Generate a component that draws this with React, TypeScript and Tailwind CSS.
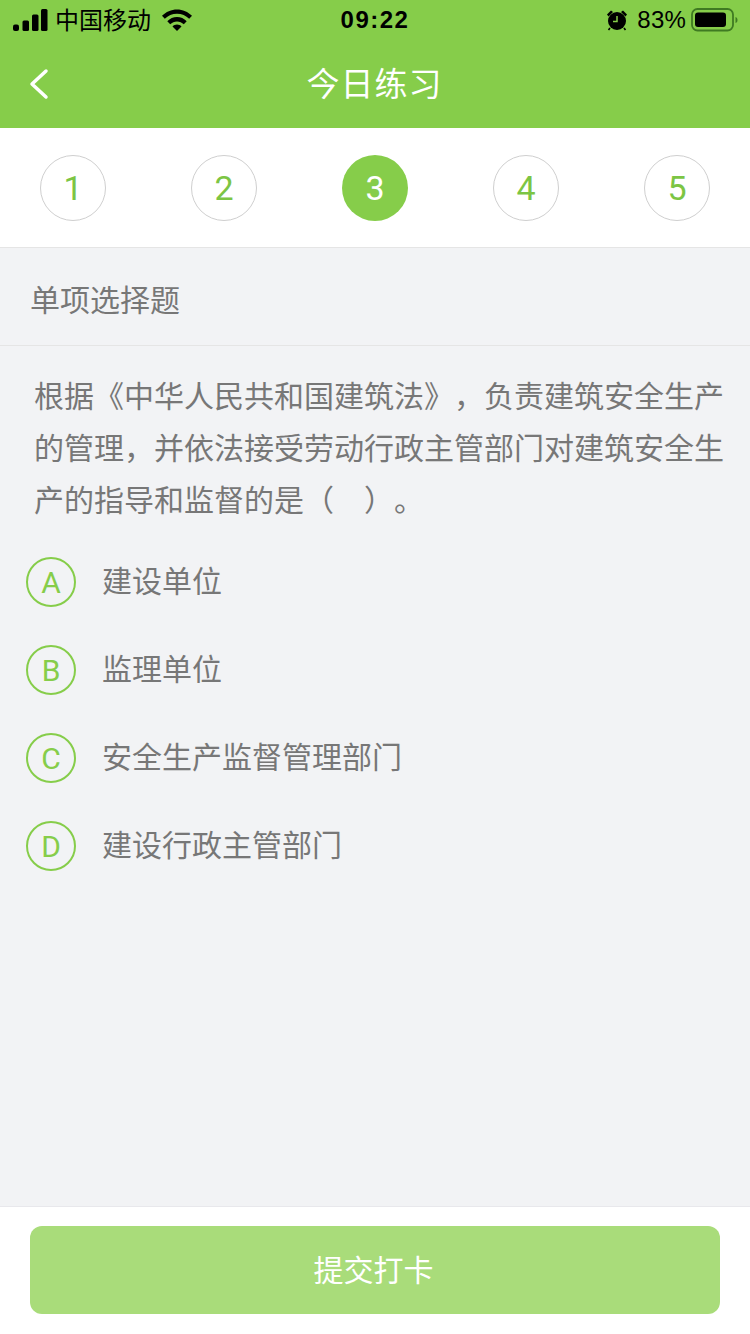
const cjk = "font-['Liberation_Sans','Noto_Sans_CJK_SC',sans-serif]";

function Signal() {
  return (
    <svg width="35" height="22" viewBox="0 0 35 22" fill="#000" className="shrink-0">
      <rect x="0" y="15.500" width="6" height="6.500" rx="2" />
      <rect x="9.500" y="11.500" width="6.500" height="10.500" rx="1.500" />
      <rect x="19" y="5.500" width="6.500" height="16.500" rx="1.500" />
      <rect x="28" y="0" width="6.500" height="22" rx="1.500" />
    </svg>
  );
}

function Wifi() {
  return (
    <svg width="30" height="22" viewBox="0 0 30 22" fill="#000" className="shrink-0">
      <path d="M0 6.800C4 2.800 9.300.5 15 .5s11 2.300 15 6.300l-2.800 3C24 6.600 19.700 4.700 15 4.700S6 6.600 2.800 9.800z" />
      <path d="M5.300 12.200C7.900 9.600 11.300 8 15 8s7.100 1.600 9.700 4.200l-2.900 3C20 13.500 17.600 12.400 15 12.400s-5 1.100-6.800 2.800z" />
      <path d="M10.500 17.500c1.200-1.200 2.800-1.900 4.500-1.900s3.300.7 4.500 1.900L15 22z" />
    </svg>
  );
}

function Alarm() {
  return (
    <svg width="22" height="22" viewBox="0 0 22 22" className="shrink-0">
      <circle cx="11" cy="12" r="9" fill="#000" />
      <path d="M1 5.500 5 1.500l2 1.500-4.500 4.500zM21 5.500 17 1.500l-2 1.500 4.500 4.500z" fill="#000" />
      <path d="M4 19l-1.500 2M18 19l1.500 2" stroke="#000" strokeWidth="1.600" />
      <path d="M11 7v5.500H7" stroke="#86cd4a" strokeWidth="1.500" fill="none" />
    </svg>
  );
}

function Battery() {
  return (
    <svg width="47" height="24" viewBox="0 0 47 24" className="shrink-0">
      <rect x="1" y="1" width="41" height="21.500" rx="5.500" fill="none" stroke="#3f7a22" strokeWidth="1.800" />
      <rect x="4" y="4.500" width="31" height="14.500" rx="3" fill="#000" />
      <path d="M44.500 9c1.500.5 2 1.500 2 3s-.5 2.500-2 3z" fill="#3f7a22" />
    </svg>
  );
}

function Step({ n, active }: { n: number; active?: boolean }) {
  return (
    <div
      className={
        active
          ? "flex h-[66px] w-[66px] items-center justify-center rounded-full bg-[#86cd4a] font-['Roboto'] text-[34px] font-normal text-white"
          : "flex h-[66px] w-[66px] items-center justify-center rounded-full border border-[#cfcfcf] bg-white font-['Roboto'] text-[34px] font-normal text-[#7cc544]"
      }
    >
      {n}
    </div>
  );
}

function Option({ letter, text }: { letter: string; text: string }) {
  return (
    <div className="flex h-[88px] items-center pl-[26px]">
      <div className="flex h-[50px] w-[50px] shrink-0 items-center justify-center rounded-full border-2 border-[#86cd4a] font-['Roboto'] text-[30px] font-normal text-[#86cd4a]">
        {letter}
      </div>
      <div className="ml-[26px] text-[30px] leading-none text-[#777777]">{text}</div>
    </div>
  );
}

export default function App() {
  return (
    <div className={`flex h-[1334px] w-[750px] flex-col overflow-hidden bg-[#f2f3f5] [text-spacing-trim:space-all] ${cjk}`}>
      <header className="h-[128px] shrink-0 bg-[#86cd4a]">
        <div className="relative flex h-[40px] items-center justify-between pl-[13px] pr-[12px] text-[24px] text-black">
          <div className="flex items-center">
            <Signal />
            <span className="ml-[7px] pt-[2px] leading-none">中国移动</span>
            <span className="ml-[11px]"><Wifi /></span>
          </div>
          <div className="absolute left-0 right-0 text-center text-[24px] font-bold tracking-[1.500px]">09:22</div>
          <div className="flex items-center">
            <Alarm />
            <span className="ml-[9px] mr-[5px] text-[24px] leading-none tracking-[0.2px]">83%</span>
            <Battery />
          </div>
        </div>
        <div className="relative flex h-[88px] items-center justify-center pr-[1px] pt-[1px] text-[33px] leading-none text-white">
          <svg
            width="20"
            height="32"
            viewBox="0 0 20 32"
            fill="none"
            stroke="#fff"
            strokeWidth="3.500"
            strokeLinecap="round"
            strokeLinejoin="round"
            className="absolute left-[29px] top-[28px]"
          >
            <path d="M17 3 3 16l14 13" />
          </svg>
          <span className="tracking-[1px]">今日练习</span>
        </div>
      </header>

      <div className="flex h-[120px] shrink-0 items-center justify-between border-b border-[#e5e5e5] bg-white px-[40px] pt-[1px]">
        {[1, 2, 3, 4, 5].map((n) => (
          <Step key={n} n={n} active={n === 3} />
        ))}
      </div>

      <div className="flex h-[98px] shrink-0 items-center border-b border-[#e5e5e5] pl-[30px] pt-[9px] text-[30px] leading-none text-[#777777]">
        单项选择题
      </div>

      <main className="flex-1">
        <p className="pl-[34px] pr-[25px] pt-[25px] text-[30px] leading-[52px] text-[#777777]">
          根据《中华人民共和国建筑法》，负责建筑安全生产的管理，并依法接受劳动行政主管部门对建筑安全生产的指导和监督的是（　）。
        </p>
        <div className="mt-[11px]">
          <Option letter="A" text="建设单位" />
          <Option letter="B" text="监理单位" />
          <Option letter="C" text="安全生产监督管理部门" />
          <Option letter="D" text="建设行政主管部门" />
        </div>
      </main>

      <footer className="h-[128px] shrink-0 border-t border-[#e8e8ec] bg-white px-[30px] pt-[19px]">
        <button className="flex h-[88px] w-full items-center justify-center rounded-[12px] bg-[#a9dc7a] pr-[3px] text-[30px] text-white">
          提交打卡
        </button>
      </footer>
    </div>
  );
}
